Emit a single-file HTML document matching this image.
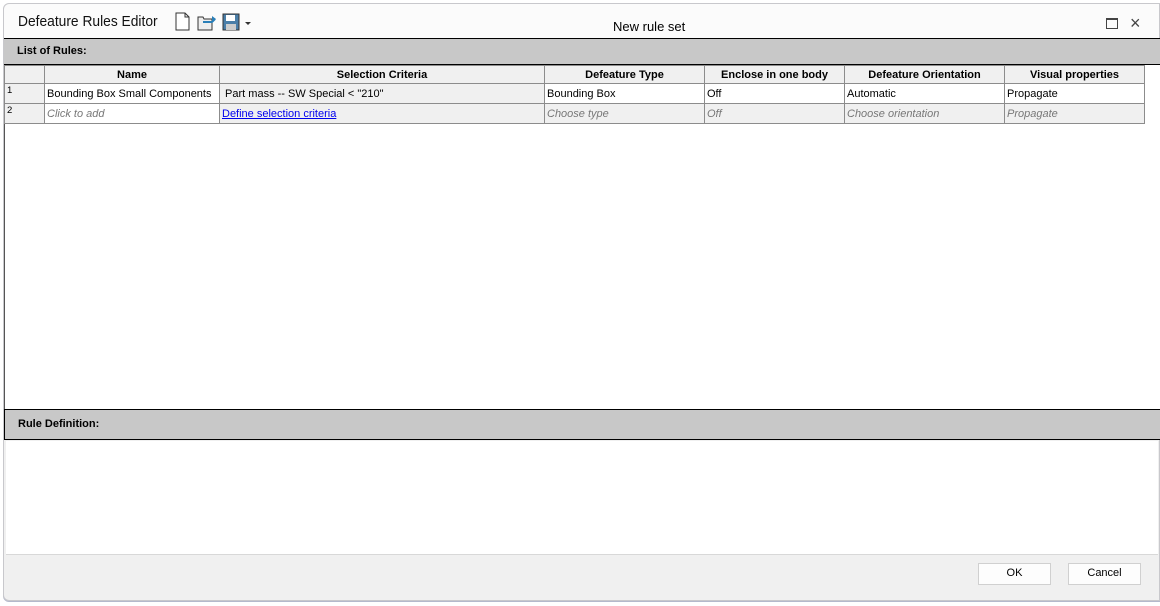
<!DOCTYPE html>
<html><head><meta charset="utf-8"><style>
*{margin:0;padding:0;box-sizing:border-box}
body{width:1160px;height:606px;background:#fff;font-family:"Liberation Sans",sans-serif;position:relative;overflow:hidden}
.a{position:absolute}
.win{left:3px;top:3px;width:1157px;height:598px;background:#f0f0f0;border:1px solid #c8c8cc;border-radius:6px 0 0 6px;box-shadow:0 1px 0 #b4b9cc}
.bar{background:#c8c8c8;border-top:1px solid #000;border-bottom:1px solid #000;font-size:11px;font-weight:bold;padding-left:13px}
table{border-collapse:collapse;font-size:11px;position:absolute;left:4px;top:65px;table-layout:fixed}
td{border:1px solid #8c8c8c;height:20px;padding:0 2px;white-space:nowrap;overflow:hidden;background:#fff}
tr.h td{height:18px;background:#f0f0f0;font-weight:bold;text-align:center}
td.n{background:#f0f0f0;vertical-align:top;font-size:9.5px;padding-top:1px}
.g{background:#f0f0f0}
.i{font-style:italic;color:#777}
.btn{background:#fdfdfd;border:1px solid #d0d0d0;font-size:11px;text-align:center;line-height:19px;width:73px;height:22px;top:563px}
</style></head><body>
<div class="a win"></div>
<div class="a" style="left:4px;top:4px;width:1155px;height:34px;background:#fbfbfb;border-radius:6px 0 0 0"></div>
<div class="a" style="left:18px;top:13px;font-size:15px;color:#111;transform:scaleX(.92);transform-origin:left">Defeature Rules Editor</div>
<svg class="a" style="left:174px;top:12px" width="80" height="20">
<path d="M2 1h9l4 4v13H2z" fill="#fff" stroke="#333"/><path d="M11 1v4h4" fill="none" stroke="#333"/>
<path d="M24 5h5l1 2h8v11H24z" fill="#eee" stroke="#333"/><path d="M29 10h9l3-3" fill="none" stroke="#2a7fb8" stroke-width="2"/><path d="M38 4l4 3-4 3" fill="#2a7fb8"/>
<rect x="49" y="2" width="16" height="16" fill="#4a7ea8" stroke="#333"/><rect x="52" y="3" width="9" height="6" fill="#fff"/><rect x="52" y="12" width="10" height="6" fill="#ccc"/>
<path d="M71 10l3 3 3-3z" fill="#333"/></svg>
<div class="a" style="left:613px;top:19px;font-size:13px;color:#000">New rule set</div>
<div class="a" style="left:1106px;top:18px;width:12px;height:11px;border:1px solid #444;border-top-width:2px"></div>
<div class="a" style="left:1130px;top:13px;font-size:18px;color:#444">×</div>
<div class="a bar" style="left:4px;top:38px;width:1156px;height:27px;line-height:25px">List of Rules:</div>
<div class="a" style="left:4px;top:65px;width:1156px;height:344px;background:#fff;border-left:1px solid #555"></div>
<table>
<colgroup><col style="width:40px"><col style="width:175px"><col style="width:325px"><col style="width:160px"><col style="width:140px"><col style="width:160px"><col style="width:140px"></colgroup>
<tr class="h"><td></td><td>Name</td><td>Selection Criteria</td><td>Defeature Type</td><td>Enclose in one body</td><td>Defeature Orientation</td><td>Visual properties</td></tr>
<tr><td class="n">1</td><td>Bounding Box Small Components</td><td class="g">&nbsp;Part mass -- SW Special &lt; "210"</td><td>Bounding Box</td><td>Off</td><td>Automatic</td><td>Propagate</td></tr>
<tr><td class="n">2</td><td class="i">Click to add</td><td class="g"><span style="color:#0000ee;text-decoration:underline">Define selection criteria</span></td><td class="g i">Choose type</td><td class="g i">Off</td><td class="g i">Choose orientation</td><td class="g i">Propagate</td></tr>
</table>
<div class="a bar" style="left:4px;top:409px;width:1156px;height:31px;line-height:29px;border-left:1px solid #000">Rule Definition:</div>
<div class="a" style="left:6px;top:441px;width:1152px;height:114px;background:#fff;border-bottom:1px solid #d8d8d8"></div>
<div class="a btn" style="left:978px">OK</div>
<div class="a btn" style="left:1068px">Cancel</div>
</body></html>
